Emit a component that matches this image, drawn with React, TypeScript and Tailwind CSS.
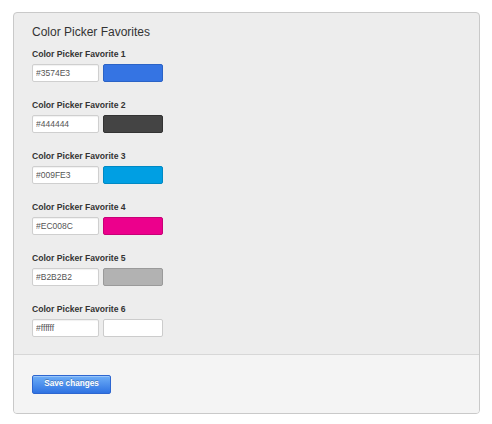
import { useState } from 'react';

const favorites = ['#3574E3', '#444444', '#009FE3', '#EC008C', '#B2B2B2', '#ffffff'];

// slightly darker edge for each swatch
const edges: Record<string, string> = {
  '#3574E3': '#2b63c6',
  '#444444': '#333333',
  '#009FE3': '#0089c4',
  '#EC008C': '#c80077',
  '#B2B2B2': '#9a9a9a',
  '#ffffff': '#cccccc',
};

export default function App() {
  const [colors, setColors] = useState(favorites);

  const update = (i: number, value: string) => {
    setColors((prev) => prev.map((c, idx) => (idx === i ? value : c)));
  };

  return (
    <div className="min-h-[424px] bg-white pt-3 pl-[13px] font-['Liberation_Sans',Arial,sans-serif]">
      <div className="w-[467px] h-[402px] rounded-[4px] border border-[#c9c9c9] bg-[#ededed] flex flex-col overflow-hidden">
        <div className="pt-[11px] pl-[18px] pb-[17px] border-b border-[#d7d7d7]">
          <h2 className="text-[12px] leading-4 text-[#333] mb-[9px]">Color Picker Favorites</h2>
          <div className="flex flex-col gap-[18px]">
            {colors.map((color, i) => (
              <div key={i}>
                <label className="block text-[8.6px] leading-[11px] font-bold text-[#333] mb-1">
                  Color Picker Favorite {i + 1}
                </label>
                <div className="flex gap-1">
                  <input
                    value={color}
                    onChange={(e) => update(i, e.target.value)}
                    className="w-[67px] h-[18px] bg-white border border-[#cfcfcf] rounded-[2px] px-[3px] text-[8.5px] text-[#555] outline-none shadow-[inset_0_1px_1px_rgba(0,0,0,0.06)]"
                  />
                  <div
                    className="w-[60px] h-[18px] rounded-[2px] border"
                    style={{ backgroundColor: favorites[i], borderColor: edges[favorites[i]] }}
                  />
                </div>
              </div>
            ))}
          </div>
        </div>
        <div className="flex-1 bg-[#f4f4f4] pt-[20px] pl-[18px]">
          <button className="block w-[79px] h-[19px] rounded-[2px] border border-[#2d66d0] bg-gradient-to-b from-[#6eaef7] to-[#2f72e2] text-white text-[8.2px] font-bold [text-shadow:0_-1px_0_rgba(0,0,0,0.25)] shadow-[inset_0_1px_0_rgba(255,255,255,0.3)]">
            Save changes
          </button>
        </div>
      </div>
    </div>
  );
}
